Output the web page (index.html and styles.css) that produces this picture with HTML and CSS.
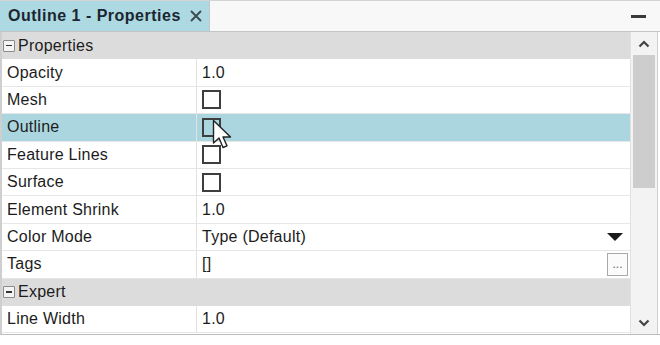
FILE: index.html
```html
<!DOCTYPE html>
<html lang="en">
<head>
    <meta charset="UTF-8">
    <title>Outline 1 - Properties</title>
    <link rel="stylesheet" href="styles.css">
</head>
<body>
    <div class="panel">
        <div class="tabbar">
            <div class="tab">
                <span class="tab-title">Outline 1 - Properties</span>
                <svg class="tab-close" width="12" height="12" viewBox="0 0 12 12"><path d="M1 1 L11 11 M11 1 L1 11" stroke="#3c4650" stroke-width="1.8" fill="none"/></svg>
            </div>
            <div class="tab-rest">
                <span class="minimize"></span>
            </div>
        </div>

        <div class="sheet">
            <div class="grid">
                <div class="category"><span class="toggle"></span>Properties</div>
                <div class="row"><span class="name">Opacity</span><span class="value">1.0</span></div>
                <div class="row"><span class="name">Mesh</span><span class="value"><span class="check"></span></span></div>
                <div class="row selected"><span class="name">Outline</span><span class="value"><span class="check"></span></span></div>
                <div class="row"><span class="name">Feature Lines</span><span class="value"><span class="check"></span></span></div>
                <div class="row"><span class="name">Surface</span><span class="value"><span class="check"></span></span></div>
                <div class="row"><span class="name">Element Shrink</span><span class="value">1.0</span></div>
                <div class="row"><span class="name">Color Mode</span><span class="value combo">Type (Default)<span class="drop"></span></span></div>
                <div class="row"><span class="name">Tags</span><span class="value combo">[]<span class="dots">...</span></span></div>
                <div class="category"><span class="toggle"></span>Expert</div>
                <div class="row"><span class="name">Line Width</span><span class="value">1.0</span></div>
            </div>
            <div class="scrollbar">
                <div class="arrow">
                    <svg width="12" height="8" viewBox="0 0 12 8"><path d="M1.5 6.5 L6 2 L10.5 6.5" stroke="#444" stroke-width="2.2" fill="none"/></svg>
                </div>
                <div class="track"><div class="thumb"></div></div>
                <div class="arrow">
                    <svg width="12" height="8" viewBox="0 0 12 8"><path d="M1.5 1.5 L6 6 L10.5 1.5" stroke="#444" stroke-width="2.2" fill="none"/></svg>
                </div>
            </div>
        </div>
        <div class="footer"></div>

        <svg class="cursor" width="22" height="32" viewBox="0 0 22 32">
            <path d="M1.5 1.5 L1.5 24 L7 19 L11 28.5 L15 26.8 L11 18 L18.5 18 Z" fill="#fff" stroke="#222" stroke-width="1.4" stroke-linejoin="round"/>
        </svg>
    </div>
</body>
</html>
```

FILE: styles.css
```css
body {
    margin: 0;
    font-family: "Liberation Sans", Arial, sans-serif;
    font-size: 16px;
    color: #1c1c1c;
    background: #fff;
}
.panel {
    position: relative;
    width: 660px;
    height: 345px;
    display: flex;
    flex-direction: column;
}
.tabbar {
    display: flex;
    height: 32px;
    border-top: 1px solid #d4d4d4;
    border-bottom: 1px solid #c4c4c4;
    box-sizing: border-box;
    background: #f8f8f8;
}
.tab {
    display: flex;
    align-items: center;
    gap: 9px;
    width: 210px;
    box-sizing: border-box;
    padding-left: 8px;
    background: #acd9e2;
    border-right: 1px solid #c6c6c6;
}
.tab-title {
    font-weight: bold;
    letter-spacing: 0.5px;
    color: #1b2630;
}
.tab-rest {
    flex: 1;
    display: flex;
    justify-content: flex-end;
    align-items: center;
    padding-right: 14px;
}
.minimize {
    width: 15px;
    height: 3px;
    background: #3a3a3a;
}

.sheet {
    display: flex;
    height: 303px;
    border-left: 2px solid #cfcfcf;
    border-bottom: 1px solid #bdbdbd;
    box-sizing: border-box;
}
.grid {
    width: 628px;
    display: flex;
    flex-direction: column;
    overflow: hidden;
}
.category {
    display: flex;
    align-items: center;
    flex: none;
    height: 27.4px;
    box-sizing: border-box;
    padding-left: 1px;
    background: #dcdcdc;
    letter-spacing: 0.25px;
}
.toggle {
    position: relative;
    width: 10px;
    height: 10px;
    margin-right: 3px;
    border: 1px solid #8a8a8a;
    border-radius: 1px;
    background: #f4f4f4;
}
.toggle::after {
    content: "";
    position: absolute;
    left: 2px;
    top: 4px;
    width: 6px;
    height: 1.5px;
    background: #333;
}
.row {
    display: grid;
    grid-template-columns: 195px 1fr;
    flex: none;
    height: 27.4px;
    box-sizing: border-box;
    border-bottom: 1px solid #e6e6e6;
    letter-spacing: 0.25px;
}
.row.selected {
    background: #abd6df;
}
.name, .value {
    display: flex;
    align-items: center;
}
.name {
    padding-left: 5px;
    border-right: 1px solid #e2e2e2;
}
.value {
    padding-left: 5px;
}
.combo {
    justify-content: space-between;
    padding-right: 2px;
}
.check {
    width: 15px;
    height: 15px;
    border: 2px solid #3e3e3e;
    background: #fff;
}
.selected .check {
    background: transparent;
}
.drop {
    width: 0;
    height: 0;
    margin-right: 5px;
    border-left: 8px solid transparent;
    border-right: 8px solid transparent;
    border-top: 8px solid #1a1a1a;
}
.dots {
    width: 19px;
    height: 21px;
    border: 1px solid #a8a8a8;
    background: #fbfbfb;
    color: #666;
    font-size: 12px;
    letter-spacing: 0;
    text-align: center;
    line-height: 20px;
}

.scrollbar {
    width: 26px;
    display: flex;
    flex-direction: column;
    background: #f3f3f3;
    border-left: 1px solid #e2e2e2;
    border-right: 1px solid #cfcfcf;
}
.arrow {
    height: 23px;
    display: flex;
    align-items: center;
    justify-content: center;
}
.track {
    flex: 1;
    padding: 0 2px;
}
.thumb {
    height: 133px;
    background: #cdcdcd;
}
.footer {
    flex: 1;
    background: #fff;
}
.cursor {
    position: absolute;
    left: 212px;
    top: 119px;
}
```
